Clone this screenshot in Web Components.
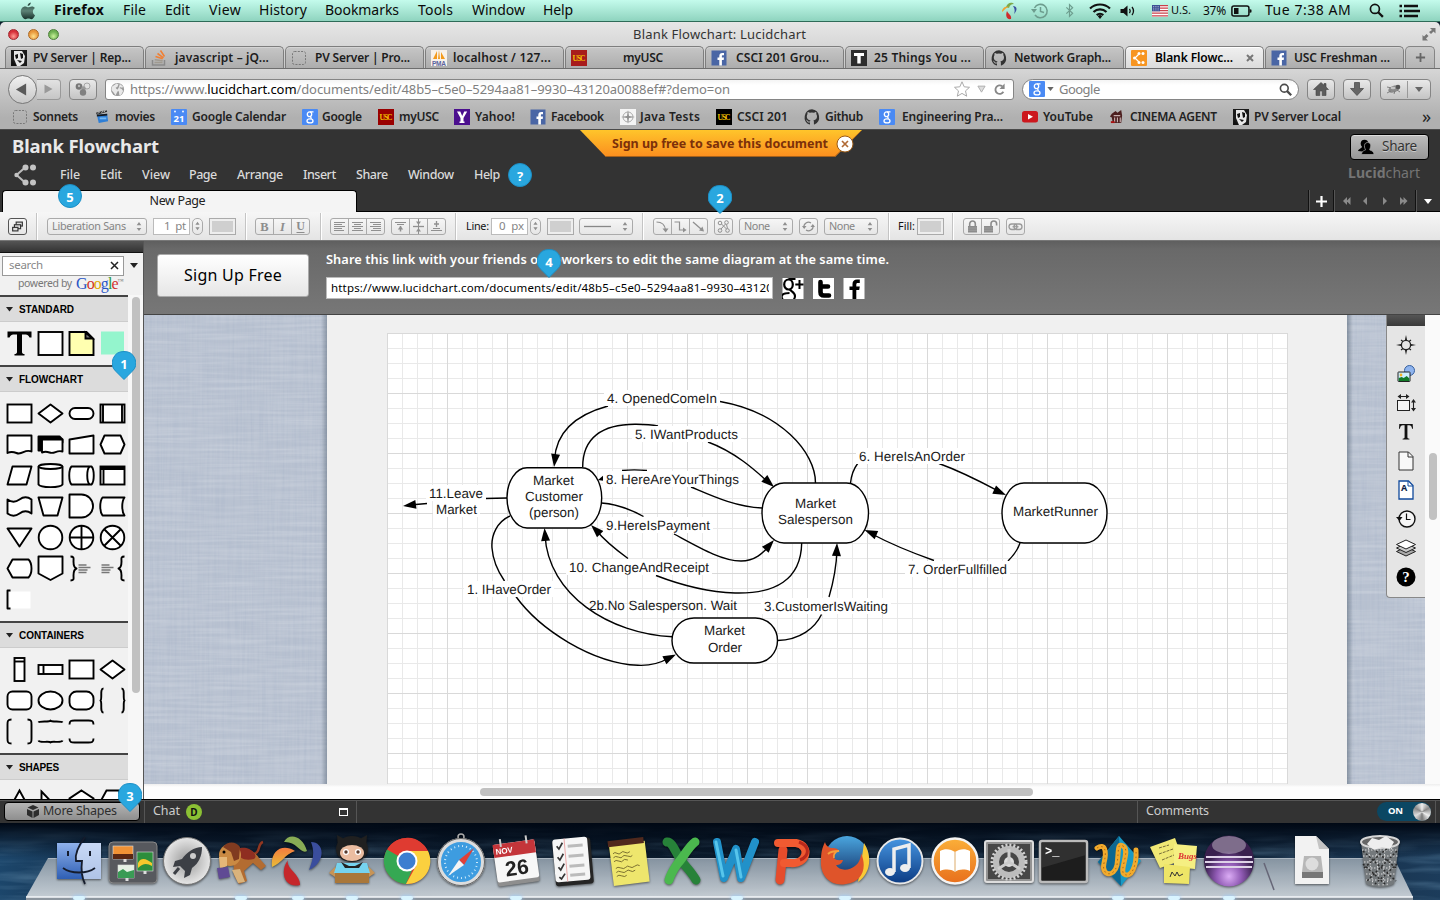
<!DOCTYPE html>
<html lang="en">
<head>
<meta charset="utf-8">
<title>Blank Flowchart: Lucidchart</title>
<style>
html,body{margin:0;padding:0;width:1440px;height:900px;overflow:hidden;background:#0c1c2c}
body{font-family:"Noto Sans","Open Sans",sans-serif;font-size:13px;line-height:1;color:#111}
</style>
</head>
<body>
<desktop-screen></desktop-screen>
<script>
const define=(name,html,after)=>customElements.define(name,class extends HTMLElement{
  connectedCallback(){
    if(this.shadowRoot)return;
    const r=this.attachShadow({mode:"open"});
    r.innerHTML=typeof html==="function"?html(this):html;
    if(after)after(this,r);
  }
});

/* Text tracked so that it fills the given width. */
define("fit-text",`<style>:host{display:inline-block;white-space:nowrap;line-height:1.3;flex:none}span{display:inline-block}</style><span><slot></slot></span>`,(el,r)=>{
  const w=+el.getAttribute("w"),s=r.querySelector("span"),n=el.textContent.length;
  const nat=s.getBoundingClientRect().width;
  el.style.width=w+"px";
  s.style.letterSpacing=((w-nat)/Math.max(1,n-.5)).toFixed(3)+"px";
});
const T=(x,w,t,c="")=>[x,w,`<fit-text w="${w}" class="${c}">${t}</fit-text>`];
const I=(x,w,n,h)=>[x,w,`<ui-icon name="${n}" w="${w}" h="${h||w}"></ui-icon>`];
/* Lays [x, width, html] items out in a flex row, with the gaps as margins. */
const row=(items,start=0)=>{let p=start;return items.map(([x,w,h])=>{const m=x-p;p=x+w;return `<div style="flex:none;display:flex;align-items:center;width:${w}px;margin-left:${m}px">${h}</div>`}).join("")};

const dots=(a,c,r)=>a.map(([x,y])=>`<circle cx="${x}" cy="${y}" r="${r}" fill="${c}"/>`).join("");
const gh=c=>`<path fill="${c}" d="M8 .3a8 8 0 0 0-2.6 15.3c.4.1.6-.2.6-.5v-1.6c-2.3.4-2.8-1-2.8-1-.4-.9-.9-1.2-.9-1.2-.7-.5 0-.5 0-.5.8.1 1.3.9 1.3.9.7 1.200 1.900.9 2.400.7.1-.5.3-.9.500-1.100-1.800-.2-3.700-.9-3.700-4 0-.9.3-1.600.8-2.200-.1-.2-.4-1 .1-2.100 0 0 .7-.2 2.200.8a7.500 7.500 0 0 1 4 0c1.500-1 2.200-.8 2.200-.8.5 1.100.2 1.900.1 2.100.5.6.8 1.300.8 2.200 0 3.100-1.900 3.800-3.700 4 .3.300.6.800.6 1.500v2.200c0 .300.1.600.6.500A8 8 0 0 0 8 .3z"/>`;
const fb=`<rect x=".5" y=".5" width="15" height="15" fill="#4a66a5"/><path d="M8.300 15.500V10H6.500V7.600h1.800V6c0-2 1-3 3-3h1.700v2.300h-1.200c-.8 0-.9.4-.9 1v1.300h2.100L12.700 10h-1.800v5.500z" fill="#fff"/>`;
const usc=(b,f)=>`<rect width="16" height="16" fill="${b}"/><text x="8" y="11" text-anchor="middle" font-family="Liberation Serif,serif" font-weight="700" font-size="7.500" textLength="13" fill="${f}">USC</text>`;
const goog=`<rect width="16" height="16" rx="1" fill="#4a8af4"/><g fill="none" stroke="#fff" stroke-width="1.300"><ellipse cx="7.500" cy="5.300" rx="2.200" ry="2.400"/><ellipse cx="8" cy="11.900" rx="3" ry="2"/><path d="M8 2.800h3.500M8.500 7.800l1 2"/></g>`;
const pv=`<rect width="16" height="16" fill="#1a1a1a"/><path d="M3 1h8l3 5-1 7-4 3H6L3 9z" fill="#e8e8e8"/><path d="M4 5l3-1v4l-2 1zM9 3l3 1v4l-2 1zM6 10l5 1-2 2zM1 11l4 4v1H0z" fill="#111"/>`;
const IC={
apple:["0 0 16 18",`<defs><linearGradient id="a" x1="0" x2="0" y1="0" y2="1"><stop offset="0" stop-color="#27443b"/><stop offset=".5" stop-color="#5d8377"/><stop offset="1" stop-color="#17302a"/></linearGradient></defs><path fill="url(#a)" d="M10.800.5c.1 1.800-1.500 3.400-3.100 3.500C7.400 2.300 9 .7 10.800.5zM15 13.200c-.8 2-2.200 4-3.600 4-1.200 0-1.700-.7-3-.7s-1.800.7-3 .7C3.300 17.200.8 13.500.8 9.800c0-3.200 2-5.300 4.300-5.300 1.300 0 2.300.8 3.200.8.800 0 2-.9 3.600-.9 1.300 0 2.400.7 3.100 1.700-3 1.800-2.600 5.900 0 7.100z"/>`],
swirl:["0 0 18 18",`<path d="M5 5C7 0 11 0 13 2c-3 0-4 1-5 4z" fill="#7da849"/><path d="M1 10c0-4 3-6 7-5-4 1-4 3-7 5z" fill="#f0a230"/><path d="M12 4c4 0 5 4 1 8 1-3 1-5-1-8z" fill="#3a51a0"/><path d="M6 9c1 3 5 4 4 8-4 1-6-3-4-8z" fill="#cf2c2c"/>`],
timem:["0 0 18 16",`<g fill="none" stroke="#6d9d8e" stroke-width="1.500"><path d="M3.500 5A6.700 6.700 0 1 1 4 12"/><path d="M9.500 4v4.500l3.500 1"/></g><path d="M0 6h6L3 10z" fill="#6d9d8e"/>`],
bt:["0 0 10 16",`<path d="M1.500 4.500l7 6.500L5 14.500v-13L8.500 5l-7 6.500" fill="none" stroke="#6d9d8e" stroke-width="1.300"/>`],
wifi:["0 0 22 16",`<g fill="none" stroke="#111" stroke-width="2.200"><path d="M1 5.500a14.500 14.500 0 0 1 20 0"/><path d="M4.500 9a9.500 9.500 0 0 1 13 0"/><path d="M7.700 12.100a5 5 0 0 1 6.600 0"/></g><path d="M8.800 13.200L11 16l2.200-2.800a3 3 0 0 0-4.400 0z" fill="#111"/>`],
vol:["0 0 16 12",`<path d="M.5 4h3l4-3.500v11L3.500 8h-3z" fill="#111"/><path d="M9.500 3.800q1.500 2.200 0 4.400M12 2q3 4 0 8" fill="none" stroke="#111" stroke-width="1.300"/>`],
flag:["0 0 16 12",`<rect width="16" height="12" fill="#fff"/><path d="M0 .7h16M0 3.200h16M0 5.700h16M0 8.200h16M0 10.800h16" stroke="#c9404a" stroke-width="1.300"/><rect width="8" height="6.300" fill="#3b4f94"/><path d="M1 1.500h6M1 3.200h6M1 4.900h6" stroke="#fff" stroke-width=".6" stroke-dasharray=".8 1"/>`],
batt:["0 0 21 12",`<rect x=".9" y=".9" width="17" height="10.200" rx="2" fill="none" stroke="#111" stroke-width="1.500"/><rect x="3" y="3" width="4.500" height="6" fill="#111"/><path d="M18.500 4v4l2-.8V4.800z" fill="#111"/>`],
mag:["0 0 16 16",`<circle cx="6.300" cy="6.300" r="4.800" fill="none" stroke="#111" stroke-width="1.800"/><path d="M9.800 9.800l5 5" stroke="#111" stroke-width="2.400"/>`],
mag2:["0 0 16 16",`<circle cx="6.500" cy="6.500" r="4.800" fill="none" stroke="#4a4a4a" stroke-width="2"/><path d="M10 10l5 5" stroke="#4a4a4a" stroke-width="2.800"/>`],
list:["0 0 21 14",`<path d="M5 2h14M5 7h16M5 12h14" stroke="#111" stroke-width="2.600"/><path d="M.5 2h2.500M.5 7h2.500M.5 12h2.500" stroke="#111" stroke-width="2.400"/>`],
full:["0 0 14 14",`<path d="M8 1h5.500v5.500l-2-2-2.500 2.500-2-2L10 3zM.5 8v5.500H6l-2-2L6.500 9l-2-2L2 9.500z" fill="#777"/>`],
pv:["0 0 16 16",pv],
so:["0 0 16 16",`<path d="M1.500 10v5h12v-5" fill="none" stroke="#8a8a8a" stroke-width="1.500"/><path d="M3.500 12.500h8M3.700 9.800l8 .9" stroke="#a09a90" stroke-width="1.500"/><path d="M4.500 6.500l7.200 2.300M6.500 3.500l6 4.300M9.500.5l4 6" stroke="#f08035" stroke-width="1.600"/>`],
dash:["0 0 16 16",`<rect x="1.500" y="1.500" width="13" height="13" rx="2" fill="none" stroke="#777" stroke-dasharray="2 1.300"/>`],
pma:["0 0 16 16",`<rect width="16" height="16" fill="#f7f1ea"/><path d="M6 1v8H2zM8 0l1 9h-2zM10 2l4 7h-4z" fill="#f39a1c"/><text x="8" y="15.500" text-anchor="middle" font-size="6.500" font-weight="700" font-family="Liberation Sans,sans-serif" textLength="14" fill="#5b64a0">PMA</text>`],
usc:["0 0 16 16",usc("#a81c1c","#f5c400")],uscb:["0 0 16 16",usc("#000","#f5c400")],uscr:["0 0 16 16",usc("#990000","#f5c400")],
fb:["0 0 16 16",fb],goog:["0 0 16 16",goog],
tt:["0 0 16 16",`<rect width="16" height="16" fill="#2d2d2d"/><path d="M3 3h10v3h-3.300v7.500H6.300V6H3z" fill="#fff"/>`],
gh:["0 0 16 16",gh("#333")],
lucid:["0 0 16 16",`<rect width="16" height="16" rx="1" fill="#f79521"/><path d="M8 4L4 8l4 4" fill="none" stroke="#fff" stroke-width="1.200"/>${dots([[8,3.500],[12,3.500],[3.500,8],[8,12.500],[12,12.500]],"#fff",1.500)}`],
x:["0 0 8 8",`<path d="M1 1l6 6M7 1L1 7" stroke="#777" stroke-width="2"/>`],
plus:["0 0 12 12",`<path d="M6 1v10M1 6h10" stroke="#666" stroke-width="2"/>`],
cal:["0 0 16 16",`<rect width="16" height="16" rx="1" fill="#4a8af4"/><circle cx="4" cy="2.500" r=".9" fill="#fff"/><circle cx="12" cy="2.500" r=".9" fill="#fff"/><text x="8" y="13" text-anchor="middle" font-size="9.500" font-weight="700" fill="#fff">21</text>`],
movie:["0 0 16 16",`<path d="M2 6l11-1 1 8-10 2z" fill="#2f7fd6"/><path d="M2 6l11-1v2L2 8z" fill="#16181c"/><path d="M1 4l11-3 1 2L2 6z" fill="#2b2b2b"/><path d="M3 5l2-2M7 4l2-2M10 3l1-2" stroke="#ddd"/><path d="M5 9h7v2H5z" fill="#76b9f5"/>`],
yahoo:["0 0 16 16",`<rect width="16" height="16" fill="#4b0f8e"/><path d="M3 2.500h3.300L8.200 7l2-4.500h3L9.500 9v3.500h1V14h-5v-1.500h1V9z" fill="#fff"/>`],
comp:["0 0 16 16",`<rect width="16" height="16" fill="#f4f4f4"/><circle cx="8" cy="8" r="5" fill="none" stroke="#aaa"/><path d="M8 1l1 6 6 1-6 1-1 6-1-6-6-1 6-1z" fill="#8f8f8f"/>`],
yt:["0 0 16 12",`<rect width="16" height="11.500" rx="2.500" fill="#cc181e"/><path d="M6 3l5 2.700L6 8.500z" fill="#fff"/>`],
cine:["0 0 16 16",`<path d="M3 5l4-3 2 2 4-3 1 6-1 8H4L3 9 1 8z" fill="#4d2020"/><path d="M5 7h7M6 9v5M9 9v5M12 9v5" stroke="#c9b0b0" stroke-width="1.200"/><path d="M2 14h4" stroke="#a11" stroke-width="2"/>`],
globe:["0 0 16 16",`<circle cx="8" cy="8" r="7" fill="#9a9a9a"/><path d="M2 5l5-3.500 2 1-1 2.500-2 1 1 1.500 2 1-2 3.500-1 2.500-2-3-2.500-3zM10.500 2l3.500 3-1 1-2-.5-1 1 2.500 1 1.500 2-2 4-2 .5-.5-3.500-1.500-2 1-2 .5-1z" fill="#e9e9e9"/>`],
star:["0 0 16 16",`<path d="M8 .8l2.200 5 5.300.5-4 3.600 1.200 5.300L8 12.400l-4.700 2.800 1.200-5.300-4-3.600 5.300-.5z" fill="#fff" stroke="#aaa"/>`],
tri:["0 0 10 8",`<path d="M1 .8h8L5 7.500z" fill="#ddd" stroke="#aaa"/>`],
dd:["0 0 8 5",`<path d="M0 0h8L4 5z" fill="#666"/>`],
reload:["0 0 14 14",`<path d="M11.200 9.500A4.600 4.600 0 1 1 10 3.500" fill="none" stroke="#888" stroke-width="2"/><path d="M12.500.5v6H7z" fill="#888"/>`],
home:["0 0 16 14",`<path d="M8 .5L.5 7.500H3V13.500h3.800V9h2.400v4.500H13V7.500h2.500L13 5V1.500h-2v1.700z" fill="#5c5c5c" stroke="#444" stroke-width=".6"/>`],
down:["0 0 14 14",`<path d="M4.500.5h5v6h4L7 13.500.5 6.500h4z" fill="#666" stroke="#444" stroke-width=".7"/>`],
bug:["0 0 16 12",`<ellipse cx="8" cy="6" rx="6" ry="3.300" transform="rotate(-20 8 6)" fill="#8a8a8a"/><circle cx="12" cy="4" r="2.300" fill="#555"/><path d="M1 4l5 1M1 10l4-2M8 11l1-3M14 9l-3-2" stroke="#777" stroke-width=".9"/><ellipse cx="7" cy="5" rx="2.500" ry="1.200" fill="#c4c4c4"/>`],
balls:["0 0 16 14",`<circle cx="4" cy="4.500" r="3.300" fill="#777"/><circle cx="12" cy="4" r="3" fill="#e2e2e2" stroke="#999" stroke-width=".8"/><circle cx="8.500" cy="6.500" r="2.300" fill="#999"/><circle cx="8" cy="10.500" r="3.200" fill="#808080"/><circle cx="4" cy="4" r="1.200" fill="#bbb"/>`],
back:["0 0 12 14",`<path d="M11.500.5v13L.5 7z" fill="#5a5a5a"/>`],
fwd:["0 0 9 10",`<path d="M.5.5v9L8.500 5z" fill="#999"/>`],
lc:["0 0 24 22",`<path d="M11 4L3 11l8 7" fill="none" stroke="#bbb" stroke-width="2"/>${dots([[12,3.500],[19.500,3.500],[12,18.500],[19.500,18.500]],"#c4c4c4",3)}<circle cx="3" cy="11" r="2.200" fill="#c4c4c4"/>`],
users:["0 0 16 16",`<circle cx="6.500" cy="4.500" r="3.800" fill="#000"/><path d="M0 12c1-3 4-2 4-5h5v6z" fill="#000"/><path d="M9.500 3.500c3 0 3.500 2.500 3 4.500-.3 1.500-.8 2-.8 3 1.500.6 4 1 4.300 4.500H3.500c.3-3.500 2.500-3.900 4-4.500 0-1-.8-1.500-1-3-.3-2 .3-4.500 3-4.500z" fill="#000" stroke="#aaa" stroke-width=".7"/>`],
stack:["0 0 17 17",`<g fill="#ddd" stroke="#333" stroke-width="1.300"><rect x="7" y="3.500" width="7" height="4.500"/><rect x="5" y="6.500" width="7" height="4.500"/><rect x="3" y="9.500" width="6" height="4"/></g>`],
ud:["0 0 6 12",`<path d="M3 1l2.500 3.500h-5zM3 11L.5 7.500h5z" fill="#8f8f8f"/>`],
b:["0 0 17 15",`<text x="8.500" y="12" text-anchor="middle" font-family="Liberation Serif,serif" font-size="12.500" font-weight="700" fill="#8d8d8d">B</text>`],
i:["0 0 17 15",`<text x="8.500" y="12" text-anchor="middle" font-family="Liberation Serif,serif" font-size="12.500" font-style="italic" font-weight="700" fill="#8d8d8d">I</text>`],
u:["0 0 17 15",`<text x="8.500" y="11.300" text-anchor="middle" font-family="Liberation Serif,serif" font-size="12" font-weight="700" fill="#8d8d8d">U</text><path d="M4.500 13.500h8" stroke="#8d8d8d"/>`],
al:["0 0 17 15",`<path d="M3 3.500h11M3 5.500h8M3 7.500h11M3 9.500h8M3 11.500h10" stroke="#909090"/>`],
ac:["0 0 17 15",`<path d="M3 3.500h11M5 5.500h7M3 7.500h11M5 9.500h7M3 11.500h11" stroke="#909090"/>`],
ar:["0 0 17 15",`<path d="M3 3.500h11M6 5.500h8M3 7.500h11M6 9.500h8M4 11.500h10" stroke="#909090"/>`],
vt:["0 0 17 15",`<path d="M3 3.500h11M5 5.500h7" stroke="#909090"/><path d="M8.500 7v5.500" stroke="#909090" stroke-width="1.500"/><path d="M5.800 10.500L8.500 7l2.700 3.500z" fill="#909090"/>`],
vm:["0 0 17 15",`<path d="M3 7.500h11" stroke="#909090" stroke-width="1.300"/><path d="M8.500 0v15" stroke="#909090"/><path d="M6 2.500h5L8.500 6zM6 12.500h5L8.500 9z" fill="#909090"/>`],
vb:["0 0 17 15",`<path d="M3 11.500h11M5 9.500h7" stroke="#909090"/><path d="M8.500 2v6M6 5h5" stroke="#909090" stroke-width="1.300"/>`],
l1:["0 0 17 15",`<path d="M2.500 3C8 3 11 6 11.500 11" fill="none" stroke="#909090" stroke-width="1.200"/><path d="M8.500 9.500h6l-2.800 4z" fill="#909090"/>`],
l2:["0 0 17 15",`<path d="M2.500 3h5v8h4" fill="none" stroke="#909090" stroke-width="1.200"/><path d="M11 8.500v5l3.500-2.500z" fill="#909090"/>`],
l3:["0 0 17 15",`<path d="M3 3l8 7" stroke="#909090" stroke-width="1.300"/><path d="M14 12.500l-5-1L12.500 7.500z" fill="#909090"/>`],
share3:["0 0 17 15",`<g fill="none" stroke="#909090"><circle cx="5" cy="4" r="1.800"/><circle cx="11.500" cy="3.500" r="1.800"/><circle cx="5" cy="11.500" r="1.800"/><circle cx="12.500" cy="11.500" r="1.800"/><path d="M6.500 5l5 5M10.500 5L6 10M11.500 5.500l1 4"/></g>`],
swap:["0 0 17 15",`<path d="M4 8.500A4.500 4.500 0 0 1 11 4M13 6.500A4.500 4.500 0 0 1 6 11" fill="none" stroke="#909090" stroke-width="1.200"/><path d="M2 7h4.500L4.200 10zM10.500 8H15l-2.200-3z" fill="#909090"/>`],
lock:["0 0 17 15",`<rect x="4" y="7" width="9" height="6.500" fill="#8c8c8c"/><path d="M5.700 7V4.800a2.800 2.800 0 0 1 5.600 0V7" fill="none" stroke="#8c8c8c" stroke-width="1.600"/><path d="M4 9h9M4 11.300h9" stroke="#aaa" stroke-width=".6"/>`],
unlock:["0 0 17 15",`<rect x="2" y="7" width="9" height="6.500" fill="#8c8c8c"/><path d="M9 7V4.800a2.800 2.800 0 0 1 5.600 0V6.500" fill="none" stroke="#8c8c8c" stroke-width="1.600"/><path d="M2 9h9M2 11.300h9" stroke="#aaa" stroke-width=".6"/>`],
link:["0 0 17 15",`<g fill="none" stroke="#9a9a9a" stroke-width="1.300"><rect x="2" y="5" width="8" height="5.500" rx="2.700"/><rect x="7" y="5" width="8" height="5.500" rx="2.700"/></g><path d="M5.500 7.700h6" stroke="#9a9a9a" stroke-width="1.200"/>`],
gp:["0 0 21 21",`<rect width="21" height="21" fill="#fff"/><ellipse cx="6" cy="6.500" rx="4.300" ry="5" fill="none" stroke="#000" stroke-width="2.200"/><path d="M6 1h7M7 11c1 2.500 5.500 3 5.500 7 0 2.500-2 5.500-6.500 5.500-3.500 0-6.500-2-7-4.500 0-3.500 4-4 8-4" fill="none" stroke="#000" stroke-width="2.100"/><path d="M17 2v9M12.800 6.500H21" stroke="#000" stroke-width="2"/>`],
tw:["0 0 21 21",`<rect width="21" height="21" fill="#fff"/><path d="M7.500 4v10c0 2.200 1.200 3.500 3.500 3.500h5M7.500 8.500H15" fill="none" stroke="#000" stroke-width="4.600" stroke-linecap="round"/>`],
fbk:["0 0 21 21",`<rect width="21" height="21" fill="#fff"/><path d="M9 21V12H6V8.500h3V6c0-3 1.700-4.500 4.500-4.500h2.800v3.400h-2c-1.100 0-1.500.5-1.500 1.500v2.100h3.500L15.700 12h-2.900v9z" fill="#000"/>`],
cube:["0 0 14 13",`<path d="M7 0l5.500 2.500L7 5 1.500 2.500zM1 4l5.500 2.500V13L1 10zM13 4L7.500 6.500V13l5.500-3z" fill="#2d2d2d"/>`],
nav:["0 0 20 20",`<circle cx="10" cy="10" r="4.600" fill="#e6e6e6" stroke="#222" stroke-width="1.300"/><path d="M10 0l1.100 5H8.900zM10 20l-1.100-5h2.200zM0 10l5-1.100v2.200zM20 10l-5 1.100V8.900z" fill="#222"/><path d="M5 5l2 1.500M15 5l-2 1.500M5 15l2-1.500M15 15l-2-1.500" stroke="#222" stroke-width="1.200"/>`],
pic:["0 0 20 20",`<circle cx="13.500" cy="6.500" r="5" fill="#8fb4ee" stroke="#36609f"/><rect x="2" y="8" width="12" height="9.500" fill="#cdeeff" stroke="#222" rx=".5"/><path d="M2.700 17v-3l3-1 2 1 3-2 2.700 2.500V17z" fill="#127a28"/><circle cx="5" cy="11" r="1.400" fill="#f3b223"/>`],
size:["0 0 20 20",`<rect x="1.500" y="7.500" width="12" height="10" fill="#f6f6f6" stroke="#222"/><path d="M3 3.500h9M17.500 8v9" stroke="#222" stroke-width="1.100"/><path d="M1.500 3.500L5 1v5zM13.500 3.500L10 1v5zM17.500 6L15 9.500h5zM17.500 18.500L15 15h5z" fill="#222"/>`],
T:["0 0 20 20",`<path d="M3.300 2h13.400l.3 4.800h-.9c-.4-2.600-1.200-3.600-3-3.600h-1.700v11.900c0 1.200.5 1.600 2 1.700v.8H6.600v-.8c1.500-.1 2-.5 2-1.700V3.200H6.900c-1.800 0-2.600 1-3 3.600H3z" fill="#111"/>`],
pg:["0 0 20 20",`<path d="M3 1h9.500L17 5.500V19H3z" fill="#f8f8f8" stroke="#333"/><path d="M12 1v5h5" fill="none" stroke="#333"/>`],
pgA:["0 0 20 20",`<path d="M3 1h9.500L17 5.500V19H3z" fill="#fff" stroke="#114a9c" stroke-width="1.300"/><path d="M12 1v5h5" fill="none" stroke="#114a9c"/><text x="8" y="10.500" text-anchor="middle" font-size="9" font-weight="700" fill="#0a1e46">A</text>`],
hist:["0 0 20 20",`<circle cx="11" cy="10" r="8" fill="#f6f6f6" stroke="#111" stroke-width="1.400"/><path d="M10.500 4.500v6h4" fill="none" stroke="#111" stroke-width="1.200"/><path d="M0 8h6.500L3.500 12z" fill="#111"/>`],
layers:["0 0 20 20",`<g stroke="#222" fill="#aaa"><path d="M10 9l9.500 4.500L10 18 .5 13.500z"/><path d="M10 5.500l9.500 4.500-9.500 4.500L.5 10z" fill="#ccc"/><path d="M10 2l9.500 4.500L10 11 .5 6.500z" fill="#fff"/></g>`],
help:["0 0 20 20",`<circle cx="10" cy="10" r="9.500" fill="#000"/><text x="10" y="15" text-anchor="middle" font-family="Liberation Serif,serif" font-size="15" font-weight="700" fill="#fff">?</text>`],
};
define("ui-icon",el=>{const n=el.getAttribute("name"),[vb,s]=IC[n];return `<style>:host{display:block;flex:none}svg{display:block;overflow:${n=="gp"?"hidden":"visible"}}</style><svg width="${el.getAttribute("w")}" height="${el.getAttribute("h")}" viewBox="${vb}">${s}</svg>`});

define("mac-menubar",`<style>:host{display:flex;align-items:center;padding-bottom:1px;box-sizing:border-box;height:22px;background:linear-gradient(#c4fbec,#8fd4bf 95%);box-shadow:inset 0 -1px #2e6b58;font-size:14px;color:#0a0a0a}.b{font-weight:700}.s{font-size:11px}.m{font-size:12px}</style>${row([
I(20,16,"apple",18),T(54,50,"Firefox","b"),T(123,23,"File"),T(165,25,"Edit"),T(209,32,"View"),T(259,48,"History"),T(325,74,"Bookmarks"),T(418,35,"Tools"),T(472,53,"Window"),T(543,30,"Help"),
I(1001,18,"swirl"),I(1031,18,"timem",16),I(1065,9,"bt",15),I(1089,22,"wifi",16),I(1120,16,"vol",12),I(1152,16,"flag",12),T(1171,20,"U.S.","s"),T(1203,23,"37%","m"),I(1231,21,"batt",12),T(1265,86,"Tue 7:38 AM"),I(1369,15,"mag",15),I(1399,21,"list",14)])}`);

const tabs=[["pv",33,98,"PV Server | Rep..."],["so",175,94,"javascript – jQ..."],["dash",315,95,"PV Server | Pro..."],["pma",453,98,"localhost / 127..."],["usc",623,40,"myUSC"],["fb",736,93,"CSCI 201 Grou..."],["tt",874,97,"25 Things You ..."],["gh",1014,97,"Network Graph..."],["lucid",1155,78,"Blank Flowc..."],["fb",1294,96,"USC Freshman ..."]];
define("browser-tab",el=>{const on=el.hasAttribute("active");return `<style>:host{display:flex;align-items:center;box-sizing:border-box;width:139px;height:22px;margin-right:1px;border:1px solid #7e7e7e;border-bottom:0;border-radius:5px 5px 0 0;background:${on?"linear-gradient(#f0f0f0,#dcdcdc)":"linear-gradient(#c6c6c6,#adadad)"};box-shadow:inset 0 1px ${on?"#fff":"#d4d4d4"};font-size:12px;font-weight:600;color:${on?"#000":"#1c1c1c"}}</style><slot></slot>`});
define("browser-chrome",`<style>:host{display:block;height:107px;background:linear-gradient(#e6e6e6,#c9c9c9 46px,#d6d6d6 47px,#b0b0b0 96px);border-top-left-radius:5px;border-top-right-radius:5px}
.title{display:flex;align-items:center;height:24px;font-size:13px;color:#333}.l{width:11px;height:11px;border-radius:50%;box-sizing:border-box}
.tabs{display:flex;height:22px;padding-left:5px;border-bottom:1px solid #6e6e6e}.new{width:30px;height:22px;box-sizing:border-box;border:1px solid #858585;border-bottom:0;border-radius:5px 5px 0 0;display:flex;align-items:center;justify-content:center;background:linear-gradient(#cacaca,#b4b4b4)}
.nav{display:flex;align-items:center;height:36px;padding-top:4px;box-sizing:border-box;font-size:13px}
.btn{height:21px;width:100%;box-sizing:border-box;border:1px solid #858585;border-radius:4px;background:linear-gradient(#e9e9e9,#c4c4c4);display:flex;align-items:center;justify-content:center}
.url{height:21px;width:100%;box-sizing:border-box;border:1px solid #858585;background:linear-gradient(#f4f4f4,#fff 5px);display:flex;align-items:center;color:#808080}.url b{font-weight:400;color:#000}
.back{width:29px;height:29px;flex:none;border-radius:50%;box-sizing:border-box;border:1px solid #777;background:linear-gradient(#f0f0f0,#c8c8c8);display:flex;align-items:center;justify-content:center;padding-right:3px}
.fw{width:24px;height:21px;box-sizing:border-box;border:1px solid #999;border-left:0;border-radius:0 4px 4px 0;background:linear-gradient(#e2e2e2,#c6c6c6);display:flex;align-items:center;justify-content:center}
.bm{display:flex;align-items:center;height:23px;font-size:12px;font-weight:600;color:#222}.q{font-size:18px;font-weight:400}</style>
<div class="title">${row([[8,12,`<div class="l" style="background:radial-gradient(circle at 50% 70%,#ff9c94,#d6303a 60%);border:1px solid #a02a30"></div>`],[28,12,`<div class="l" style="background:radial-gradient(circle at 50% 70%,#ffe08a,#e8963a 60%);border:1px solid #ac6a26"></div>`],[48,12,`<div class="l" style="background:radial-gradient(circle at 50% 70%,#c8f29a,#6fb052 60%);border:1px solid #4c7f3a"></div>`],T(633,173,"Blank Flowchart: Lucidchart"),I(1422,14,"full")])}</div>
<div class="tabs">${tabs.map(([ic,x,w,t],i)=>{const s=5+140*i;return `<browser-tab ${i==8?"active":""}>${row([I(s+6,16,ic),T(x,w,t)].concat(i==8?[I(1246,8,"x")]:[]),s+1)}</browser-tab>`}).join("")}<div class="new"><ui-icon name="plus" w="11" h="11"></ui-icon></div></div>
<div class="nav">${row([[8,53,`<div class="back"><ui-icon name="back" w="12" h="13"></ui-icon></div><div class="fw"><ui-icon name="fwd" w="9" h="10"></ui-icon></div>`],[69,28,`<div class="btn"><ui-icon name="balls" w="16" h="14"></ui-icon></div>`],
[105,909,`<div class="url" style="border-radius:3px">${row([I(110,15,"globe"),T(130,600,"https://www.<b>lucidchart.com</b>/documents/edit/48b5–c5e0–5294aa81–9930–43120a0088ef#?demo=on"),I(954,16,"star"),I(977,9,"tri",8),I(993,13,"reload")],106)}</div>`],
[1022,277,`<div class="url" style="border-radius:11px">${row([I(1029,16,"goog"),I(1047,7,"dd",4),T(1059,41,"Google"),I(1279,13,"mag2")],1023)}</div>`],
[1307,28,`<div class="btn"><ui-icon name="home" w="16" h="14"></ui-icon></div>`],[1343,28,`<div class="btn"><ui-icon name="down" w="14" h="14"></ui-icon></div>`],
[1380,51,`<div class="btn" style="justify-content:flex-start">${row([I(1386,16,"bug",12),[1407,1,`<div style="width:1px;height:17px;background:#999"></div>`],I(1415,8,"dd",5)],1381)}</div>`]])}</div>
<div class="bm">${row([I(12,16,"dash"),T(33,45,"Sonnets"),I(95,15,"movie"),T(115,40,"movies"),I(171,16,"cal"),T(192,94,"Google Calendar"),I(302,16,"goog"),T(322,40,"Google"),I(378,16,"uscr"),T(399,40,"myUSC"),I(454,16,"yahoo"),T(475,40,"Yahoo!"),I(530,16,"fb"),T(551,53,"Facebook"),I(620,16,"comp"),T(640,60,"Java Tests"),I(716,16,"uscb"),T(737,51,"CSCI 201"),I(804,16,"gh"),T(825,38,"Github"),I(879,16,"goog"),T(902,101,"Engineering Pra..."),I(1022,16,"yt",12),T(1043,50,"YouTube"),I(1109,15,"cine"),T(1130,87,"CINEMA AGENT"),I(1233,16,"pv"),T(1254,87,"PV Server Local"),T(1422,13,"»","q")])}</div>`);

define("lucid-header",`<style>:host{display:block;height:83px;background:#333;box-sizing:border-box;border-top:1px solid #4a4a4a;position:relative;color:#d2d2d2}
.main{display:flex;justify-content:space-between;height:60px}.left{width:600px}.t{font-size:18.500px;font-weight:700;color:#e9e9e9;margin:4px 0 0 12px;display:block;height:25px}
.menu{display:flex;align-items:center;height:24px;margin-top:4px;font-size:12.500px;font-weight:500;color:#dadada}
.right{width:92px;margin-top:4px}.share{margin-left:2px;width:79px;height:26px;box-sizing:border-box;border:1px solid #000;border-radius:4px;background:linear-gradient(#bdbdbd,#979797);box-shadow:inset 0 1px #ddd;display:flex;align-items:center;padding-left:7px;gap:8px;color:#333;font-size:13.500px;text-shadow:0 1px #ccc}
.logo{margin-top:4px;color:#757575;font-size:14px;display:block}
.strip{display:flex;height:22px;justify-content:space-between;position:relative}
.tab{width:355px;margin-left:2px;border:1px solid #000;border-bottom:0;box-sizing:border-box;height:22px;border-radius:4px 4px 0 0;background:#f4f4f4;color:#222;font-size:12.500px;display:flex;align-items:center;justify-content:center;padding-right:4px}
.pg{display:flex;flex:1;align-items:center;box-shadow:inset 0 -1px #000}.sep{width:1px;height:22px;background:#111;box-shadow:1px 0 #555}
.ribbon{position:absolute;left:580px;top:0;width:282px;height:27px;display:flex;align-items:center}.ribbon>svg{position:absolute;left:0;top:0}
.ribbon fit-text{position:relative;margin:1px 0 0 32px;font-size:12.500px;font-weight:700;color:#7c300a}</style>
<div class="main"><div class="left"><fit-text w="147" class="t">Blank Flowchart</fit-text><div class="menu">${row([I(13,25,"lc",22),T(60,20,"File"),T(100,22,"Edit"),T(142,28,"View"),T(189,28,"Page"),T(237,46,"Arrange"),T(303,33,"Insert"),T(356,32,"Share"),T(408,46,"Window"),T(474,26,"Help")])}</div></div>
<div class="right"><div class="share"><ui-icon name="users" w="16" h="16"></ui-icon><fit-text w="35">Share</fit-text></div><fit-text w="72" class="logo"><b>Lucid</b>chart</fit-text></div></div>
<div class="strip"><div class="tab"><fit-text w="56">New Page</fit-text></div><div class="pg">${row([[1308,1,`<div class="sep"></div>`],[1316,11,`<svg width="11" height="11"><path d="M5.500 0v11M0 5.500h11" stroke="#fff" stroke-width="2.200"/></svg>`],[1333,1,`<div class="sep"></div>`],[1342,66,`<svg width="66" height="8" viewBox="0 0 66 8"><path d="M5 0L1 4l4 4zM8.500 0l-4 4 4 4zM25 0l-4 4 4 4zM41 0l4 4-4 4zM58 0l4 4-4 4zM61.500 0l4 4-4 4z" fill="#8a8a8a"/></svg>`],[1415,1,`<div class="sep"></div>`],[1424,8,`<svg width="8" height="5"><path d="M0 0h8L4 5z" fill="#fff"/></svg>`]],357)}</div></div>
<div class="ribbon"><svg width="282" height="27"><defs><linearGradient id="r" x1="0" x2="0" y1="0" y2="1"><stop offset="0" stop-color="#ffc52b"/><stop offset="1" stop-color="#fb8d1e"/></linearGradient></defs><path d="M0 0h282l-27 27H26z" fill="url(#r)"/><path d="M26 26.500h229L281 1" fill="none" stroke="#a5601a"/><circle cx="265" cy="14" r="8" fill="#fff" stroke="#9b5a14"/><path d="M262 11l6 6M268 11l-6 6" stroke="#b06a35" stroke-width="1.700"/></svg><fit-text w="216">Sign up free to save this document</fit-text></div>`);

const bx=(w,ic,on)=>`<div class="grp ${on||""}" style="width:${w}px">${ic.map(n=>`<div><ui-icon name="${n}" w="17" h="15"></ui-icon></div>`).join("")}</div>`;
const sel=(w,inner)=>`<div class="grp sel" style="width:${w}px">${inner}<ui-icon name="ud" w="6" h="11"></ui-icon></div>`;
const step=`<div class="grp stp"><ui-icon name="ud" w="5" h="12"></ui-icon></div>`;
const sw=`<div class="sw"><i></i></div>`,sp=`<div class="sp"></div>`;
define("lucid-toolbar",`<style>:host{display:flex;align-items:center;height:29px;box-sizing:border-box;background:linear-gradient(#f6f6f6,#e4e4e4);border-bottom:1px solid #777;font-size:10.800px;color:#858585}
.grp{display:flex;height:17px;box-sizing:border-box;border:1px solid #aaa;border-radius:3px;background:linear-gradient(#f6f6f6,#e6e6e6)}.grp>div{flex:1;display:flex;justify-content:center;align-items:center;overflow:hidden}.grp>div+div{border-left:1px solid #aaa}.on{border-color:#555}
.sel{align-items:center;justify-content:space-between;padding:0 4px 0 4px}.stp{width:11px;border-radius:5px;align-items:center;justify-content:center}
.sw{width:27px;height:17px;box-sizing:border-box;border:1px solid #aaa;background:#eee;padding:2px}.sw i{display:block;height:11px;background:#cfcfcf}
.sp{width:1px;height:27px;background:#c4c4c4;box-shadow:1px 0 #fff}.inp{display:flex;align-items:center;justify-content:flex-end;width:37px;height:17px;box-sizing:border-box;border:1px solid #bbb;background:#fff;padding-right:3px;font-size:11.500px}.k{color:#111}</style>
${row([[8,19,bx(19,["stack"],"on")],[36,1,sp],[47,100,sel(100,`<fit-text w="74">Liberation Sans</fit-text>`)],[153,37,`<div class="inp"><fit-text w="22">1&nbsp; pt</fit-text></div>`],[192,11,step],[209,27,sw],[245,1,sp],[255,55,bx(55,["b","i","u"])],[320,1,sp],[330,55,bx(55,["al","ac","ar"])],[391,55,bx(55,["vt","vm","vb"])],[455,1,sp],T(466,23,"Line:","k"),[491,37,`<div class="inp"><fit-text w="25">0&nbsp; px</fit-text></div>`],[530,11,step],[547,27,sw],[579,54,sel(54,`<svg width="27" height="3"><path d="M0 1.500h27" stroke="#888" stroke-width="1.300"/></svg>`)],[642,1,sp],[653,55,bx(55,["l1","l2","l3"])],[714,19,bx(19,["share3"])],[739,54,sel(54,`<fit-text w="26">None</fit-text>`)],[799,19,bx(19,["swap"])],[824,54,sel(54,`<fit-text w="26">None</fit-text>`)],[888,1,sp],T(898,17,"Fill:","k"),[917,27,sw],[952,1,sp],[963,37,bx(37,["lock","unlock"])],[1006,19,bx(19,["link"])]])}`);

/* Palette shapes, each in a 31px cell centred on the origin. */
const R=(w,h,x="")=>`<rect x="${-w/2}" y="${-h/2}" width="${w}" height="${h}" ${x}/>`;
const P=d=>`<path d="${d}"/>`,N=d=>`<path d="${d}" fill="none"/>`;
const ln=x=>`<path d="M${x} -3.500h8M${x} -1h12M${x} 1.500h9M${x} 4h8" stroke="#777" stroke-width="1.400"/>`;
const SH={
std:[`<path d="M-12-12h24v6h-2c-1-2.500-2.500-3-5.500-3h-2V8.500c0 1.500 1 2 2.500 2V12H-5v-1.500c1.500 0 2.500-.5 2.500-2V-9h-2c-3 0-4.500.5-5.500 3h-2z" fill="#000" stroke="none"/>`,R(24,23),`<path d="M-12-11.500h17l7 7v16h-24z" fill="#ffffb0"/><path d="M4-11v6h7z" fill="#777"/>`,`<rect x="-11.500" y="-12" width="23" height="23" fill="#94f5cd" stroke="none"/>`],
flow:[R(24,18),P("M0-9L12 0 0 9-12 0z"),R(24,11,'rx="5.500"'),R(24,18)+N("M-9.500-9V9M9.500-9V9"),
P("M-12-9h24V7c-7-3-9 4-15 1.500-4-1.500-6-1.500-9 0z"),`<path d="M-12 6V-8h21l3 3v3h-21v8z" fill="#000"/><path d="M-8.500-5H12V7c-6-2-8 3-13 1-3-1-5-1-7.500 0z"/>`,P("M-12-5L12-9V9h-24z"),P("M-8-9H8l4 9-4 9H-8l-4-9z"),
P("M-7-9h19L7 9h-19z"),P("M-12-9V9c2 3.500 22 3.500 24 0V-9")+`<ellipse cy="-9" rx="12" ry="2.500"/>`,P("M-10-9H10c3 3 3 15 0 18h-20c-3-3-3-15 0-18z")+N("M8-9c-3 3-3 15 0 18"),R(24,18)+N("M-9-9V9M-12-6.500h24")+`<path d="M-12-8h24" stroke-width="3"/>`,
P("M-12-7c4 3 8 3 12 0s8-3 12 0V7c-4-3-8-3-12 0s-8 3-12 0z"),P("M-12-9h24L7 9H-7z"),P("M-12-12H0a11 11 0 0 1 0 23h-12z"),P("M-10-9h22c-3 4-3 14 0 18h-22c-3-4-3-14 0-18z"),
P("M-12-9h24L0 9z"),`<circle r="11.800"/>`,`<circle r="11.800"/>`+N("M0-12v24M-12 0h24"),`<circle r="11.800"/>`+N("M-8.500-8.500l17 17M8.500-8.500l-17 17"),
P("M-7-9H9c4 4 4 14 0 18H-7l-5-9z"),P("M-12-12h24V5L0 11.500-12 5z"),N("M-11-12c4 0 3 2 3 5s0 6 3 7c-3 1-3 4-3 7s1 5-3 5")+ln(-3),N("M12-12c-4 0-3 2-3 5s0 6-3 7c3 1 3 4 3 7s-1 5 3 5")+ln(-11),
`<rect x="-10" y="-8" width="21" height="17" fill="#fff" stroke="none"/>`+N("M-9-9h-3V9h3")],
cont:[R(10,23)+N("M-5-8h10"),R(24,9)+N("M-7-4.500v9"),R(24,18),P("M0-9L12 0 0 9-12 0z"),R(24,18,'rx="5"'),`<ellipse rx="12" ry="9"/>`,`<rect x="-12" y="-9" width="24" height="18" rx="7"/>`,N("M-9-12c-4 0-1 10-3 12 2 2-1 12 3 12M9-12c4 0 1 10 3 12-2 2 1 12-3 12"),
N("M-8-12c-4 0-4 2-4 5V7c0 3 0 5 4 5M8-12c4 0 4 2 4 5V7c0 3 0 5-4 5"),N("M-12-9c1-2 11 0 12-2 1 2 11 0 12 2M-12 9c1 3 11 0 12 2 1-2 11 1 12-2"),N("M-12-7c0-4 2-4 5-4H7c3 0 5 0 5 4M-12 7c0 4 2 4 5 4H7c3 0 5 0 5-4")],
shp:[P("M0-11L12 11h-24z"),P("M-9-10L11 11H-9z"),P("M0-11L12-3 7 11H-7l-5-14z"),P("M-6-11H6l6 11-6 11H-6l-6-11z")]};
for(const k of ["flow","cont"])SH[k]=SH[k].map(s=>s.replaceAll("<path ","<path stroke-linejoin=\"round\" "));
define("shape-section",el=>{const k=el.getAttribute("kind");return `<style>:host{display:block;flex:none;overflow:hidden}.h{display:flex;align-items:center;gap:6px;height:25px;box-sizing:border-box;border-bottom:1px solid #ccc;background:#dcdcdc;padding-left:6px;font:700 10px "Liberation Sans",sans-serif;border-top:0;color:#000}.t{border-top:2px solid #444}.g{display:grid;grid-template-columns:repeat(4,31px);grid-auto-rows:31px;padding:5.500px 0 0 4px}svg{display:block;fill:#fff;stroke:#000;stroke-width:1.900}</style>
<div class="t"></div><div class="h"><svg width="7" height="5" style="fill:#222;stroke:none"><path d="M0 0h7L3.500 4.500z"/></svg><fit-text w="${el.getAttribute("tw")}"><slot></slot></fit-text></div><div class="g">${SH[k].map(s=>`<svg width="31" height="31" viewBox="-15.500 -15.500 31 31">${s}</svg>`).join("")}</div>`},(el,r)=>{
  /* The slotted title is measured here, where its text is known. */
  const f=r.querySelector("fit-text"),s=f.shadowRoot.querySelector("span"),w=+el.getAttribute("tw");s.style.letterSpacing="0";
  const n=s.getBoundingClientRect().width;s.style.letterSpacing=((w-n)/el.textContent.length)+"px";
});
define("shape-panel",`<style>:host{display:flex;flex-direction:column;width:144px;box-sizing:border-box;border-right:1px solid #555;height:558px;background:#f1f1f1}
.cap{height:12px;background:linear-gradient(#555,#333);flex:none;border-bottom:1px solid #111;box-sizing:border-box}.s{display:flex;align-items:center;height:21px;margin:2px 0 0 2px;gap:6px;flex:none}.in{width:122px;height:20px;box-sizing:border-box;border:1px solid #999;background:#fff;display:flex;align-items:center;justify-content:space-between;padding:0 4px 0 6px;color:#888;font-size:11.500px}
.pw{display:flex;align-items:center;height:15px;gap:4px;padding-left:18px;font-size:10.500px;color:#777;flex:none;margin-bottom:4px}.pw b{font-weight:400}.g{font:16px "Liberation Serif",serif}
.b{display:flex;flex:1;min-height:0}.l{width:128px;display:flex;flex-direction:column;overflow:hidden}.sc{width:15px;background:#f7f7f7}.th{width:8px;height:396px;margin:2px 0 0 4px;border-radius:4px;background:#c1c1c1}</style>
<div class="cap"></div><div class="s"><div class="in"><fit-text w="34">search</fit-text><svg width="9" height="9"><path d="M1 1l7 7M8 1L1 8" stroke="#222" stroke-width="1.500"/></svg></div><svg width="8" height="5"><path d="M0 0h8L4 5z" fill="#222"/></svg></div>
<div class="pw"><fit-text w="54">powered by</fit-text><fit-text w="47" class="g"><b style="color:#2a56c6">G</b><b style="color:#d2322d">o</b><b style="color:#e0a800">o</b><b style="color:#2a56c6">g</b><b style="color:#2b9a3e">l</b><b style="color:#d2322d">e</b><b style="font-size:6px;color:#777;vertical-align:6px">™</b></fit-text></div>
<div class="b"><div class="l"><shape-section kind="std" tw="55" style="height:70px">STANDARD</shape-section><shape-section kind="flow" tw="64" style="height:256px">FLOWCHART</shape-section><shape-section kind="cont" tw="65" style="height:132px">CONTAINERS</shape-section><shape-section kind="shp" tw="40" style="height:60px">SHAPES</shape-section></div><div class="sc"><div class="th"></div></div></div>`);

define("share-banner",`<style>:host{display:flex;height:74px;box-sizing:border-box;background:linear-gradient(#5f5f5f,#696969 8px,#777);border-bottom:1px solid #444}
.su{width:152px;height:43px;margin:13px 0 0 13px;border:1px solid #aaa;box-sizing:border-box;border-radius:3px;background:linear-gradient(#fff,#e6e6e6);display:flex;align-items:center;justify-content:center;font-size:16px;color:#000}
.c{margin:10px 0 0 17px}.c>fit-text{display:block;color:#fff;font-size:12.800px;font-weight:600;height:19px}.r{display:flex;align-items:center;gap:9px;margin-top:7px}.in{width:447px;height:22px;box-sizing:border-box;border:1px solid #bbb;background:#fff;display:flex;align-items:center;padding-left:4px;overflow:hidden;font-size:11.500px;color:#000}.in div{width:438px;overflow:hidden}</style>
<div class="su"><fit-text w="98">Sign Up Free</fit-text></div><div class="c"><fit-text w="563">Share this link with your friends or coworkers to edit the same diagram at the same time.</fit-text>
<div class="r"><div class="in"><div><fit-text w="442">https://www.lucidchart.com/documents/edit/48b5–c5e0–5294aa81–9930–43120</fit-text></div></div><ui-icon name="gp" w="22" h="21"></ui-icon><ui-icon name="tw" w="21" h="21"></ui-icon><ui-icon name="fbk" w="22" h="21"></ui-icon></div></div>`);

const head=(x,y,fx,fy)=>{const a=Math.atan2(y-fy,x-fx),c=Math.cos(a),s=Math.sin(a),L=13,W=4.500;return `<path d="M${x} ${y}L${x-L*c-W*s} ${y-L*s+W*c}L${x-L*c+W*s} ${y-L*s-W*c}z" fill="#000"/>`};
const node=(x,y,w,h,r)=>{const k=r*.55,m=h/2*.55;const X=x+w,Y=y+h,c=y+h/2;return `<path fill="#fff" d="M${x+r} ${y}H${X-r}C${X-r+k} ${y} ${X} ${c-m} ${X} ${c}S${X-r+k} ${Y} ${X-r} ${Y}H${x+r}C${x+r-k} ${Y} ${x} ${c+m} ${x} ${c}S${x+r-k} ${y} ${x+r} ${y}z"/>`};
const lab=(x,w,y,t,bg)=>(bg?`<rect x="${x-3}" y="${y-8}" width="${w+6}" height="16" fill="#fff" stroke="none"/>`:"")+`<text x="${x}" y="${y+4.700}" textLength="${w}">${t}</text>`;
define("diagram-canvas",`<style>:host{display:block;width:1281px;height:469px;background:#b9c2d1}svg{display:block}text{font:13.400px "Liberation Sans",Arial,sans-serif;fill:#1a1a1a;text-rendering:geometricPrecision}</style>
<svg width="1281" height="469" viewBox="144 315 1281 469"><defs>
<filter id="n" x="0" y="0" width="1" height="1"><feTurbulence type="fractalNoise" baseFrequency=".4 .015" numOctaves="2" seed="4"/><feColorMatrix values="0 0 0 0 .35  0 0 0 0 .42  0 0 0 0 .55  .55 0 0 0 -.2"/></filter>
<filter id="m" x="0" y="0" width="1" height="1"><feTurbulence type="fractalNoise" baseFrequency=".015 .35" numOctaves="2" seed="9"/><feColorMatrix values="0 0 0 0 1  0 0 0 0 1  0 0 0 0 1  .35 0 0 0 -.12"/></filter>
<pattern id="g1" x="387" y="333" width="15" height="15" patternUnits="userSpaceOnUse"><path d="M.5 0v15M0 .5h15" stroke="#e9e9e9"/></pattern>
<pattern id="g2" x="387" y="333" width="60" height="60" patternUnits="userSpaceOnUse"><path d="M.5 0v60M0 .5h60" stroke="#d9d9d9"/></pattern>
<linearGradient id="s1"><stop offset="0" stop-color="#345" stop-opacity="0"/><stop offset="1" stop-color="#345" stop-opacity=".35"/></linearGradient><linearGradient id="s2"><stop offset="0" stop-color="#345" stop-opacity=".4"/><stop offset="1" stop-color="#345" stop-opacity="0"/></linearGradient></defs>
<rect x="144" y="315" width="1281" height="469" filter="url(#n)"/><rect x="144" y="315" width="1281" height="469" filter="url(#m)"/>
<rect x="321" y="315" width="6" height="469" fill="url(#s1)"/><rect x="1347" y="315" width="6" height="469" fill="url(#s2)"/>
<rect x="327" y="315" width="1020" height="469" fill="#f0f0f0"/><rect x="387" y="333" width="901" height="451" fill="#fff"/><rect x="387" y="333" width="901" height="451" fill="url(#g1)"/><rect x="387" y="333" width="901" height="451" fill="url(#g2)"/>
<g fill="none" stroke="#000" stroke-width="1.400">
<path d="M815.500 483C815.500 452 780 412 720 401.500M608 406C575 415 556 432 554.500 460M582.700 467C582.700 438 602 424 636 424.300Q650 424.500 658 426M708 442C735 452 755 470 768 482M762 508C735 507 710 495 691 487M622 470.500Q634 469.300 647 470.500M601.500 503C616 504 630 509 643.500 516.500M674 534C700 548 722 561 741 561C755 561 763 553 769 546M801.700 543C801 580 775 594 735 593C705 592 678 584 656 575.500M628 558.500C615 549 604 540 596 530M510 516C497 522 491 535 492 548C493 562 499 573 504.500 581M515.500 596C540 630 592 663 638 665.300C652 666 662 662 669 658M672.500 636.700C610 634 548 595 545 535M777.500 640.500C800 640 815 628 821.500 614.500M829 597C834 580 836.500 565 837 550M850.500 483C851.500 473 855 467 858 463M939 463.500C965 473 985 484 1000 492M1020 543C1017 552 1012 557 1008 561M934 560.500C910 552 885 541 870 533M507 498L485 498.500M427 503.500L410 505"/>
${node(507,467.700,94.700,60.300,20)+node(762,483,106.500,60,22)+node(1002,483,105,60,22)+node(672,618,105.500,45,22)}</g>
${head(554,467,555.500,455)+head(774,487,764,478)+head(774,540,765,550)+head(591,525,600,534)+head(676,654.500,665,660)+head(544.500,528,545.500,540)+head(837,543,836.500,555)+head(1006,495,995,490)+head(864.500,530,876,535)+head(403,506,415,504.500)}
<path d="M598 480l7-6v7z" fill="#000"/>
${[[607,110,398,"4. OpenedComeIn",1],[635,103,434,"5. IWantProducts",1],[606,133,479,"8. HereAreYourThings",1],[606,104,525,"9.HereIsPayment",1],[569,140,567,"10. ChangeAndReceipt",1],[467,84,589,"1. IHaveOrder",1],[589,148,605,"2b.No Salesperson. Wait"],[764,124,606,"3.CustomerIsWaiting",1],[859,106,456,"6. HereIsAnOrder",1],[908,99,569,"7. OrderFullfilled",1],[429,54,493,"11.Leave",1],[436,41,509,"Market",1],[533,41,480,"Market"],[525,58,496,"Customer"],[529,50,512,"(person)"],[795,41,503,"Market"],[778,75,519,"Salesperson"],[1013,85,511,"MarketRunner"],[704,41,630,"Market"],[708,34,647,"Order"]].map(a=>lab(...a)).join("")}
</svg>`);
define("tool-rail",`<style>:host{display:block;width:39px;height:283px;box-sizing:border-box;background:#e5e5e5;border-left:1px solid #888;border-bottom:1px solid #888;border-radius:0 0 0 4px}.c{height:11px;background:linear-gradient(#555,#3a3a3a)}.l{display:flex;flex-direction:column;align-items:center;gap:9px;padding-top:9px}</style><div class="c"></div><div class="l">${["nav","pic","size","T","pg","pgA","hist","layers","help"].map(n=>`<ui-icon name="${n}" w="20" h="20"></ui-icon>`).join("")}</div>`);
define("work-area",`<style>:host{display:flex;flex-direction:column;width:1296px;height:558px}.m{display:grid;grid-template-columns:1281px 15px;height:469px}.m diagram-canvas,.m tool-rail{grid-row:1;grid-column:1}.m tool-rail{justify-self:end}.v{background:#fafafa;grid-column:2}.v i{display:block;width:8px;height:67px;border-radius:4px;background:#c1c1c1;margin:138px 0 0 4px}.h{display:flex;align-items:center;height:15px;background:linear-gradient(#eee,#fdfdfd 3px)}.h i{display:block;width:553px;height:8px;border-radius:4px;background:#c1c1c1;margin-left:336px}</style><share-banner></share-banner><div class="m"><diagram-canvas></diagram-canvas><tool-rail></tool-rail><div class="v"><i></i></div></div><div class="h"><i></i></div>`);

define("status-bar",`<style>:host{display:flex;align-items:center;height:24px;box-sizing:border-box;background:#333;border-top:1px solid #000;box-shadow:inset 0 1px #555;font-size:12.500px;color:#ccc}.ms{width:136px;height:19px;box-sizing:border-box;border:1px solid #000;border-radius:4px;background:linear-gradient(#b5b5b5,#8e8e8e);display:flex;align-items:center;padding-left:21px;gap:3px;color:#2e2e2e}.s{width:1px;height:24px;background:#555}.d{width:16px;height:16px;border-radius:50%;background:#8bc034;color:#111;font:700 10px "Noto Sans",sans-serif;display:flex;align-items:center;justify-content:center}.w{width:9px;height:8px;border:1px solid #fff;border-top-width:2px;box-sizing:border-box}.on{width:54px;height:19px;border-radius:10px;background:#0b4763;display:flex;align-items:center;justify-content:space-between;padding-left:11px;box-sizing:border-box;color:#fff;font-size:9.500px;font-weight:700}.k{width:18px;height:18px;border-radius:50%;background:conic-gradient(#eee,#888,#eee,#777,#ddd,#888,#eee)}</style>
${row([[4,136,`<div class="ms"><ui-icon name="cube" w="14" h="13"></ui-icon><fit-text w="74">More Shapes</fit-text></div>`],[144,1,`<div class="s"></div>`],T(153,27,"Chat"),[186,16,`<div class="d">D</div>`],[339,9,`<div class="w"></div>`],[356,1,`<div class="s"></div>`],[1137,1,`<div class="s"></div>`],T(1146,63,"Comments"),[1377,54,`<div class="on"><fit-text w="15">ON</fit-text><div class="k"></div></div>`],[1435,1,`<div class="s"></div>`]])}`);

const lg=(id,a,b)=>`<linearGradient id="${id}" x1="0" x2="0" y1="0" y2="1"><stop offset="0" stop-color="${a}"/><stop offset="1" stop-color="${b}"/></linearGradient>`;
/* Dock entries: centre x, running flag, drawing. */
const D=[
[79,1,`${lg("z","#8fb2ec","#2f5fb4")}<rect x="3" y="9" width="44" height="36" fill="url(#z)"/><path d="M29 9C23 17 21 22 22 27h6c-.600 6-.300 12 1 18h18V9z" fill="#dbe6f8" opacity=".75"/><path d="M31 3C22 15 21 22 22 27h6c-1 8 0 17 3 23M9 34c8 6 24 6 32 0" fill="none" stroke="#151c2c" stroke-width="1.800"/><path d="M14 17v5M36 17v5" stroke="#151c2c" stroke-width="2"/>`],
[133,0,`<rect x="1" y="8" width="48" height="41" rx="4" fill="#57595e" stroke="#888"/><rect x="5" y="12" width="20" height="13" fill="#f09235" stroke="#ddd" stroke-width=".6"/><path d="M5 20h20v5H5z" fill="#592713"/><rect x="29" y="18" width="16" height="19" fill="#2c8e3c" stroke="#ddd" stroke-width=".6"/><path d="M30 29c4-7 9-3 14 0v3c-5-3-9-3-14 2z" fill="#f5c72c"/><rect x="10" y="31" width="16" height="13" fill="#e6f1e5" stroke="#ddd" stroke-width=".6"/><path d="M10 38l5-3 4 3 7-2v8H10z" fill="#3a9b55"/><path d="M17 25v3M37 37v3M19 44v3" stroke="#ddd" stroke-width="3"/>`],
[187,0,`<radialGradient id="z"><stop offset="0" stop-color="#999"/><stop offset="1" stop-color="#e6e6e6"/></radialGradient><circle cx="25" cy="27" r="23.500" fill="url(#z)" stroke="#777"/><path d="M40 13c-8 0-15 5-20 12l-7 2-2 6 7-1 5 5-1 7 6-3 2-7c7-5 10-12 10-21z" fill="#3c3f45"/><circle cx="31" cy="22" r="3" fill="#ccc"/><path d="M17 34l-5 6" stroke="#3c3f45" stroke-width="3"/>`],
[241,1,`<path d="M38 20c7-2 3-10 9-12" fill="none" stroke="#913721" stroke-width="2.500"/><path d="M17 17c6-7 22-1 26 7l7 8-5 4-8-7-9 8 3 10-8 3-5-9z" fill="#b36c31"/><path d="M20 16c11-7 24 5 18 9-9 2-15 0-18-9z" fill="#8f2e21"/><circle cx="14" cy="21" r="11" fill="#ca8a43"/><path d="M7 13c5-7 14-5 17 0l-1 12-5 2-3-9z" fill="#803b20"/><path d="M3 23h8v9l-7 3z" fill="#e5b778"/><path d="M1 34l11-1 2 10-11 2z" fill="#604a94"/><path d="M16 36l6 13 7-1-5-13z" fill="#d9b37c"/><circle cx="8" cy="18" r="1.500"/>`],
[298,1,`${lg("z","#f47b3e","#e9bd38")}<path d="M11 8C16-2 30 2 34 17c-6 4-10-10-23-9z" fill="#88ac55"/><path d="M-1 33c-2-16 10-24 23-16-10 3-13 12-23 16z" fill="url(#z)"/><path d="M38 8c14 0 15 20-2 28 4-11 6-17 2-28z" fill="#3a4e9d"/><path d="M15 26c-3 8 13 15 12 25-15 4-21-13-12-25z" fill="#c5272b"/>`],
[352,1,`<ellipse cx="25" cy="15" rx="16" ry="13" fill="#202020"/><path d="M10 1l9 5-8 8zM40 1l-9 5 8 8z" fill="#202020"/><ellipse cx="25" cy="19" rx="12" ry="8" fill="#ebbda1"/><circle cx="19" cy="18" r="3" fill="#fff"/><circle cx="31" cy="18" r="3" fill="#fff"/><circle cx="19" cy="18" r="1.700" fill="#583a2d"/><circle cx="31" cy="18" r="1.700" fill="#583a2d"/><path d="M8 33h34v16H8z" fill="#a9773a"/><path d="M8 33l-6 6 6 4zM42 33l6 6-6 4z" fill="#c79456"/><path d="M10 29h30l3 10H7z" fill="#76d3ef"/><path d="M14 28l8 4 6 0 8-4-4 6H18z" fill="#222"/>`],
[407,1,`<circle cx="25" cy="27" r="23" fill="#e7392d"/><path d="M25 27L5 15.500A23 23 0 0 0 24 50l8-18z" fill="#35a853"/><path d="M25 17h21A23 23 0 0 1 24 50l10-18z" fill="#fbd03f"/><path d="M5.500 15A23 23 0 0 1 46 17H25z" fill="#df3b31"/><circle cx="25" cy="27" r="10.500" fill="#fff"/><circle cx="25" cy="27" r="8.500" fill="#3d7ed0"/>`],
[461,0,`<circle cx="25" cy="3" r="3" fill="none" stroke="#aaa" stroke-width="1.500"/><circle cx="25" cy="28" r="22" fill="#3d9ce0" stroke="#ddd" stroke-width="4"/><circle cx="25" cy="28" r="23.500" fill="none" stroke="#444" stroke-width=".8"/><circle cx="25" cy="28" r="16" fill="none" stroke="#cce9fa" stroke-width="2" stroke-dasharray="1 3"/><path d="M38 14L28 31l-5-5z" fill="#e04038"/><path d="M12 42l11-16 5 5z" fill="#f4f4f4"/>`],
[516,1,`<g transform="rotate(-8 25 27)"><rect x="4" y="9" width="42" height="41" rx="2" fill="#8e8e8e"/><rect x="4" y="8" width="42" height="38" rx="2" fill="#f7f7f7"/><path d="M4 8h42v13H4z" fill="#c4353a"/><text x="6" y="18" font-size="8" font-weight="700" fill="#fff" font-family="Liberation Sans,sans-serif">NOV</text><text x="25" y="41" text-anchor="middle" font-size="21" font-weight="700" font-family="Liberation Sans,sans-serif" fill="#222">26</text><path d="M12 3v8M38 3v8" stroke="#ccc" stroke-width="2"/></g>`],
[572,0,`<g transform="rotate(-5 25 27)"><rect x="7" y="5" width="38" height="46" rx="3" fill="#252525"/><rect x="7" y="4" width="35" height="43" rx="3" fill="#f6f6f6"/><path d="M19 4v43" stroke="#eba9a9"/><path d="M11 11l2 3 4-6M11 22l2 3 4-6M11 32l2 3 4-6M11 42l2 2 4-5" stroke="#333" fill="none" stroke-width="1.700"/><path d="M22 12h15M22 22h15M22 32h15M22 41h15" stroke="#bbb" stroke-width="3"/></g>`],
[628,0,`<g transform="rotate(-7 25 27)"><rect x="8" y="9" width="36" height="41" fill="#eee66d"/><path d="M7 5h36v6H7z" fill="#50291d"/><path d="M11 18q2-2 4 0t4 0 4 0 5 0M11 22q2-2 5 0t4 0 5 0 5 0M11 26q2-2 5 0t4 0 5 0M12 33q2-2 5 0t5 0 4 0 5 0 5 0M12 37q2-2 5 0t5 0 4 0 5 0M12 41q2-2 5 0t5 0" stroke="#665a25" fill="none" stroke-width=".8"/></g>`],
[682,0,`<path d="M10 8c6-1 10 15 16 21 5 6 9 10 13 17" stroke="#278239" stroke-width="9" fill="none" stroke-linecap="round"/><path d="M38 8c-6 4-12 16-17 21-4 6-7 10-9 17" stroke="#4bb84e" stroke-width="9" fill="none" stroke-linecap="round"/>`],
[737,1,`<path d="M5 8l7 36 12-29 5 29L43 8" fill="none" stroke="#2191c9" stroke-width="8" stroke-linejoin="round" stroke-linecap="round"/><path d="M4 8l7 34M24 16l5 27" stroke="#57c5eb" stroke-width="3" stroke-linecap="round"/>`],
[791,0,`<path d="M14 46l3-30" stroke="#e64c2b" stroke-width="9" stroke-linecap="round"/><path d="M12 9h18c16 3 10 22-5 20H18" fill="none" stroke="#f05a31" stroke-width="8" stroke-linecap="round"/><path d="M33 8c11 4 11 14 1 18" fill="none" stroke="#b9281b" stroke-width="3"/>`],
[845,1,`${lg("z","#4aa6df","#122c63")}<circle cx="27" cy="24" r="22" fill="url(#z)"/><path d="M44 9c9 14 6 31-6 39l4-25z" fill="#f9c936"/><path d="M5 8c1 4 4 6 8 6 3 0 5 1 6 3-4 1-6 3-5 7 2 3 6 2 9 2-1 4-4 5-7 5 3 6 13 6 19 1 4-3 6-8 6-13 7 16 0 30-15 31C12 53 0 43 1 27c0-8 1-13 4-19z" fill="#df542a"/><path d="M8 20c3-3 8-3 11-3-4 1-6 3-5 7" fill="none" stroke="#f5a03c" stroke-width="1.800"/>`],
[900,0,`${lg("z","#4695e0","#0c3b83")}<circle cx="25" cy="27" r="22.500" fill="url(#z)" stroke="#e8e8e8" stroke-width="2"/><path d="M19 38V15l15-4v23" fill="none" stroke="#eee" stroke-width="3.500"/><ellipse cx="15" cy="38" rx="5" ry="4" fill="#eee"/><ellipse cx="30" cy="34" rx="5" ry="4" fill="#eee"/>`],
[955,0,`${lg("z","#fbaf39","#e86f1c")}<circle cx="25" cy="27" r="22.500" fill="url(#z)" stroke="#f4f4f4" stroke-width="2.500"/><path d="M10 17c5-3 11-2 15 1 4-3 10-4 15-1v20c-5-2-11-2-15 1-4-3-10-3-15-1z" fill="#fff"/><path d="M25 18v20" stroke="#ddab6b"/>`],
[1009,0,`<rect x="1" y="7" width="48" height="41" rx="2" fill="#939393" stroke="#ddd" stroke-width="2"/><rect x="4" y="10" width="42" height="35" fill="#474747"/><circle cx="25" cy="28" r="13" fill="none" stroke="#bcbcbc" stroke-width="6"/><circle cx="25" cy="28" r="17" fill="none" stroke="#d2d2d2" stroke-width="3" stroke-dasharray="2 2"/><circle cx="25" cy="28" r="5" fill="#ddd"/><path d="M25 28V15M25 28l-11 7M25 28l11 7" stroke="#ccc" stroke-width="3"/>`],
[1063,0,`<rect x="2" y="7" width="47" height="41" rx="2" fill="#1d1d1d" stroke="#bbb" stroke-width="2.500"/><path d="M3 34l45-13V9H3z" fill="#444" opacity=".5"/><text x="7" y="21" font-size="12" font-weight="700" font-family="Liberation Mono,monospace" fill="#fff">&gt;_</text>`],
[1118,1,`<path d="M26 2l22 25-20 25L5 28z" fill="#1899c4"/><path d="M26 2L5 28l23 24z" fill="#0d6791"/><path d="M4 14c8-5 10 3 7 15-3 13 10 15 13 2 2-15 0-22 6-19 8 4-4 24 1 28 7 5 13-8 12-24" fill="none" stroke="#f1aa2c" stroke-width="5" stroke-linecap="round"/><path d="M4 14c8-5 10 3 7 15-3 13 10 15 13 2 2-15 0-22 6-19 8 4-4 24 1 28 7 5 13-8 12-24" fill="none" stroke="#a86917" stroke-width="1" stroke-dasharray="1.500 3"/>`],
[1174,1,`<path d="M1 13l25-9 8 22-23 8z" fill="#f0e875"/><path d="M25 10l23 2-2 23-21-2z" fill="#f5ef82"/><path d="M15 30l26 3-1 17-25-1z" fill="#eee567"/><path d="M10 14l10-3M10 20l14-5M13 26l12-5" stroke="#695e32" stroke-width=".9" stroke-dasharray="3 1"/><text x="29" y="25" font-size="9" font-style="italic" font-weight="700" fill="#d33" font-family="Liberation Serif,serif">Bugs</text><path d="M21 43l2-5 3 4 2-4 2 4 4-2" stroke="#333" fill="none"/>`],
[1229,1,`<radialGradient id="z" cy=".8"><stop offset="0" stop-color="#dbacf5"/><stop offset=".5" stop-color="#915bb5"/><stop offset="1" stop-color="#39204e"/></radialGradient><ellipse cx="25" cy="27" rx="25" ry="25.500" fill="url(#z)"/><path d="M2 23h46M1 28h48M2 33h46" stroke="#ded2e8" stroke-width="1.800"/><ellipse cx="25" cy="11" rx="17" ry="9" fill="#fff" opacity=".35"/>`],
[1312,0,`<path d="M8 2h21l13 13v35H8z" fill="#f2f2f2"/><path d="M29 2l3 13h10z" fill="#c4c4c4"/><path d="M17 22h17l2 16v6H15v-6z" fill="#b7b7b7"/><circle cx="25" cy="30" r="6.500" fill="#ddd"/><rect x="15" y="38" width="21" height="6" fill="#777"/>`],
[1380,0,`<path d="M6 8l5 42c7 4 21 4 28 0l5-42z" fill="#74797c"/><path d="M7 16h36M8 22h35M9 28h33M10 34h31M11 40h29M11 46h27M13 11l5 41M21 11l3 42M30 11l-2 42M37 11l-5 41" stroke="#dcdcdc" stroke-dasharray="1.500 1.500"/><path d="M8 17l33 30M42 17L11 48M8 30l22 20M42 30L20 50M15 12l26 22M35 12L9 34" stroke="#2b2b2b" stroke-width="1.500" stroke-dasharray="2 2"/><ellipse cx="25" cy="8" rx="19" ry="6" fill="#666" stroke="#d7d7d7" stroke-width="2"/><path d="M12 10l5-6 7 2 7-4 8 6-4 7-8-2-8 3z" fill="#eee"/>`]];
define("dock-icon",el=>{const d=D[+el.getAttribute("n")];return `<style>:host{display:grid;width:50px;height:66px;overflow:visible}svg{display:block;overflow:visible;grid-area:1/1}.m{filter:drop-shadow(0 1px 1px #0008)}.f{margin-top:51px;transform:scaleY(-1);transform-origin:50% 26px;opacity:.22;filter:blur(1px);display:block}i{grid-area:1/1;display:block;width:12px;height:4px;border-radius:2px;margin:62px auto 0;background:#d9f4ff;box-shadow:0 0 4px #9cf}</style><svg class="m" width="50" height="52" viewBox="0 0 50 52">${d[2]}</svg>${d[1]?"<i></i>":""}`});
define("mac-dock",`<style>:host{display:grid;height:77px;background:linear-gradient(90deg,#1c466b,#102338 12%,#0a1a2b 50%,#152c44 90%,#1c3c5b);overflow:hidden}.bg,.r{grid-area:1/1}.r{display:flex;align-items:flex-start;padding-top:11px}</style>
<svg class="bg" width="1440" height="77"><defs>${lg("s","#8a98a5","#ccd3d9")}${lg("sh","#000814","#00081400")}<filter id="w" x="0" y="0" width="1" height="1"><feTurbulence type="fractalNoise" baseFrequency=".012 .12" numOctaves="3" seed="3"/><feColorMatrix values="0 0 0 0 .2 0 0 0 0 .38 0 0 0 0 .55 .7 0 0 0 -.3"/></filter></defs><rect width="1440" height="77" filter="url(#w)"/><rect width="1440" height="35" fill="url(#sh)"/><path d="M48 35H1394L1413 74H26z" fill="url(#s)" opacity=".95"/><path d="M48 35.500H1394" stroke="#abb6c0"/><path d="M26 74H1413V77H26z" fill="#8c959e"/><path d="M26 74H1413" stroke="#f4f7fa" stroke-width="1.500"/><path d="M1264 40l10 27" stroke="#667" stroke-width="1.500"/></svg>
<div class="r">${row(D.map((d,i)=>[d[0]-25,50,`<dock-icon n="${i}"></dock-icon>`]))}</div>`);

/* Numbered tutorial markers that float above the page. */
define("hint-pin",el=>`<style>:host{position:absolute;width:24px;height:29px;font-size:13px;font-weight:700;color:#fff}svg{position:absolute;left:0;top:0}span{position:absolute;left:0;right:0;top:4px;text-align:center;line-height:18px}</style><svg width="24" height="29"><path d="${el.hasAttribute("round")?"M12 .5a11.500 11.500 0 1 1 0 23a11.500 11.500 0 1 1 0-23z":"M12 .5A11.500 11.500 0 0 1 20 20.500L12 28.500 4 20.500A11.500 11.500 0 0 1 12 .5z"}" fill="#29a7df" stroke="#1c8fc6"/></svg><span><slot></slot></span>`);

define("desktop-screen",`<style>:host{display:block;width:1440px;height:900px;position:relative;overflow:hidden}.w{display:flex;height:558px}</style>
<mac-menubar></mac-menubar><browser-chrome></browser-chrome><lucid-header></lucid-header><lucid-toolbar></lucid-toolbar><div class="w"><shape-panel></shape-panel><work-area></work-area></div><status-bar></status-bar><mac-dock></mac-dock>
<hint-pin style="left:112px;top:351px">1</hint-pin><hint-pin style="left:708px;top:185px">2</hint-pin><hint-pin style="left:118px;top:783px">3</hint-pin><hint-pin style="left:537px;top:249px">4</hint-pin><hint-pin round style="left:58px;top:184px">5</hint-pin><hint-pin round style="left:508px;top:163px">?</hint-pin>`);
</script>
</body>
</html>
